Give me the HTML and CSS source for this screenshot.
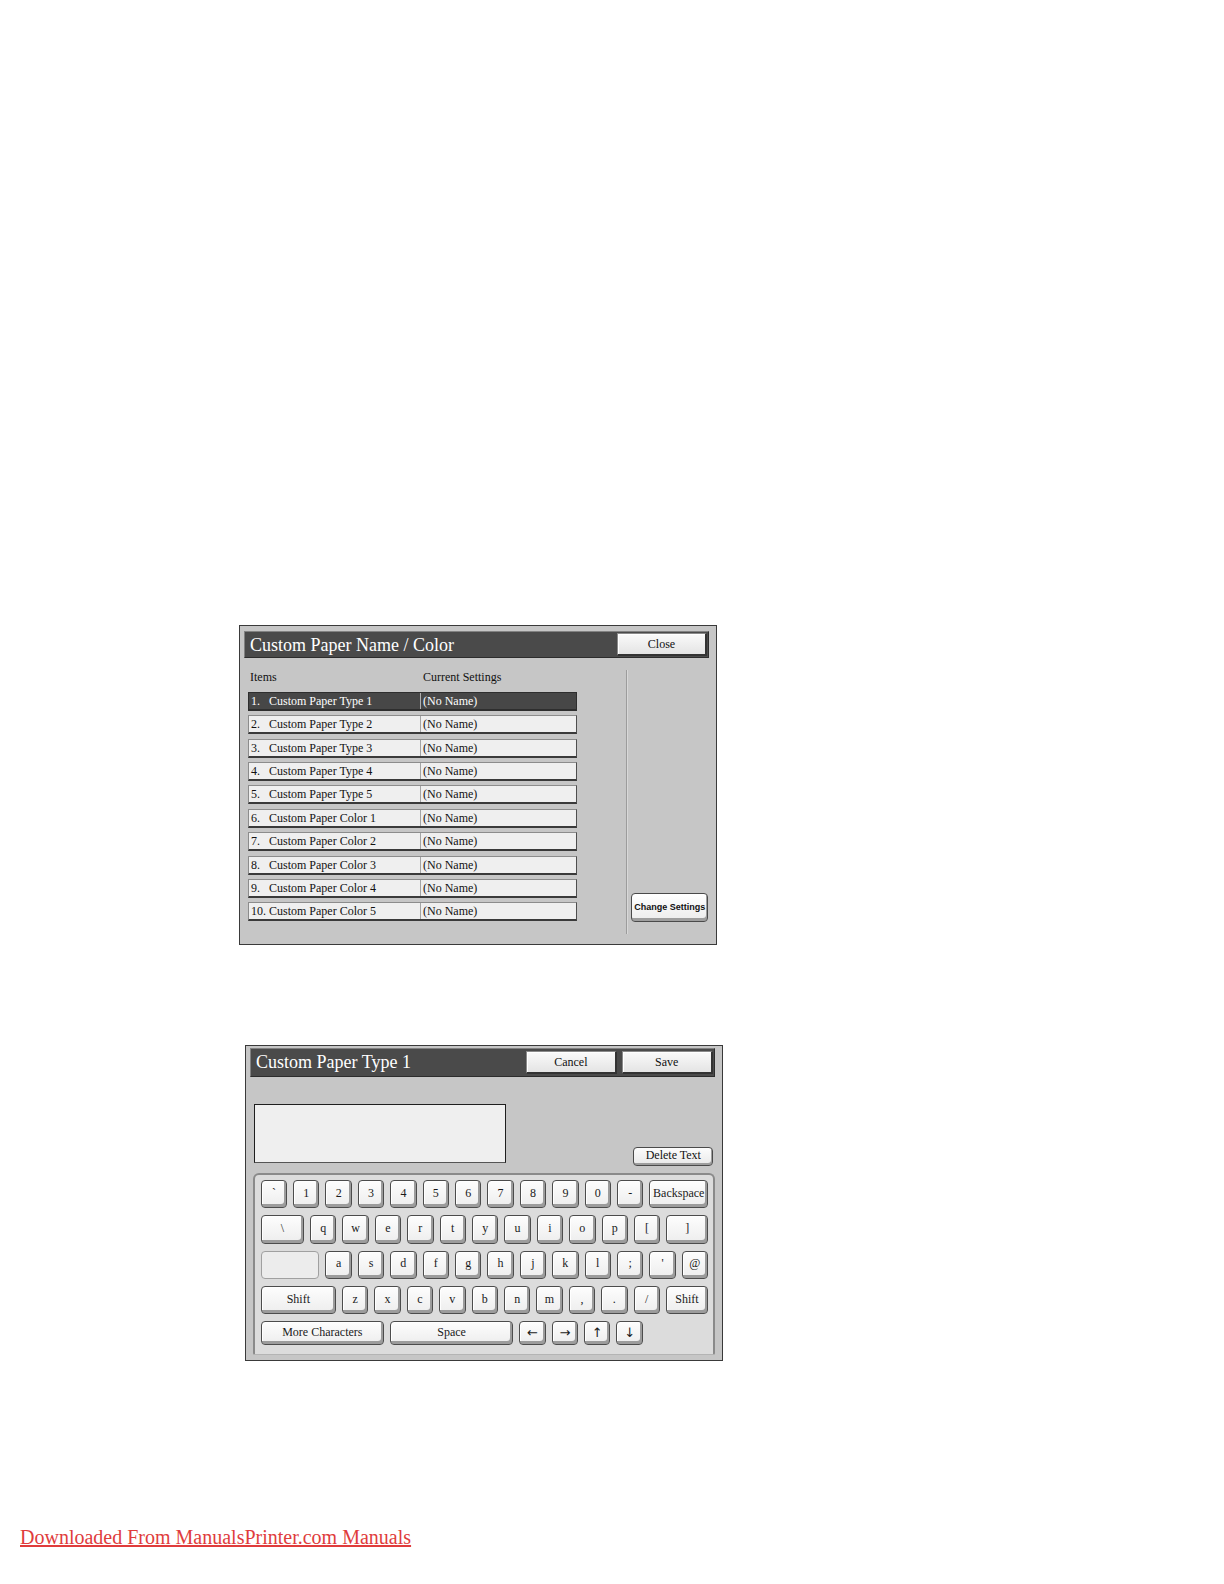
FILE: index.html
```html
<!DOCTYPE html>
<html lang="en">
<head>
<meta charset="utf-8">
<title>Custom Paper Name / Color</title>
<link rel="stylesheet" href="styles.css">
</head>
<body>
<div class="page">
  <section class="dlg dlg-list">
    <header class="titlebar">
      <h1 class="title">Custom Paper Name / Color</h1>
      <button class="tbtn btn-close">Close</button>
    </header>
    <div class="list-body">
      <div class="list">
        <div class="list-head"><span class="col-item">Items</span><span class="col-set">Current Settings</span></div>
        <div class="rows">
          <div class="row sel"><span class="cell-item"><span class="num">1.</span>Custom Paper Type 1</span><span class="cell-set">(No Name)</span></div>
          <div class="row"><span class="cell-item"><span class="num">2.</span>Custom Paper Type 2</span><span class="cell-set">(No Name)</span></div>
          <div class="row"><span class="cell-item"><span class="num">3.</span>Custom Paper Type 3</span><span class="cell-set">(No Name)</span></div>
          <div class="row"><span class="cell-item"><span class="num">4.</span>Custom Paper Type 4</span><span class="cell-set">(No Name)</span></div>
          <div class="row"><span class="cell-item"><span class="num">5.</span>Custom Paper Type 5</span><span class="cell-set">(No Name)</span></div>
          <div class="row"><span class="cell-item"><span class="num">6.</span>Custom Paper Color 1</span><span class="cell-set">(No Name)</span></div>
          <div class="row"><span class="cell-item"><span class="num">7.</span>Custom Paper Color 2</span><span class="cell-set">(No Name)</span></div>
          <div class="row"><span class="cell-item"><span class="num">8.</span>Custom Paper Color 3</span><span class="cell-set">(No Name)</span></div>
          <div class="row"><span class="cell-item"><span class="num">9.</span>Custom Paper Color 4</span><span class="cell-set">(No Name)</span></div>
          <div class="row"><span class="cell-item"><span class="num">10.</span>Custom Paper Color 5</span><span class="cell-set">(No Name)</span></div>
        </div>
      </div>
      <div class="vsep"></div>
      <div class="side"><button class="btn-change">Change Settings</button></div>
    </div>
  </section>

  <section class="dlg dlg-kbd">
    <header class="titlebar titlebar-kbd">
      <h1 class="title">Custom Paper Type 1</h1>
      <button class="tbtn btn-cancel">Cancel</button>
      <button class="tbtn btn-save">Save</button>
    </header>
    <div class="entry-area">
      <div class="textbox"></div>
      <button class="btn-delete">Delete Text</button>
    </div>
    <div class="keyboard">
      <div class="krow">
        <span class="key">`</span><span class="key">1</span><span class="key">2</span><span class="key">3</span><span class="key">4</span><span class="key">5</span><span class="key">6</span><span class="key">7</span><span class="key">8</span><span class="key">9</span><span class="key">0</span><span class="key">-</span><span class="key k-back">Backspace</span>
      </div>
      <div class="krow">
        <span class="key k-bslash">\</span><span class="key">q</span><span class="key">w</span><span class="key">e</span><span class="key">r</span><span class="key">t</span><span class="key">y</span><span class="key">u</span><span class="key">i</span><span class="key">o</span><span class="key">p</span><span class="key">[</span><span class="key k-rbr">]</span>
      </div>
      <div class="krow">
        <span class="key k-blank"></span><span class="key">a</span><span class="key">s</span><span class="key">d</span><span class="key">f</span><span class="key">g</span><span class="key">h</span><span class="key">j</span><span class="key">k</span><span class="key">l</span><span class="key">;</span><span class="key">'</span><span class="key">@</span>
      </div>
      <div class="krow">
        <span class="key k-shift">Shift</span><span class="key">z</span><span class="key">x</span><span class="key">c</span><span class="key">v</span><span class="key">b</span><span class="key">n</span><span class="key">m</span><span class="key">,</span><span class="key">.</span><span class="key">/</span><span class="key k-shift-r">Shift</span>
      </div>
      <div class="krow krow-last">
        <span class="key k-more">More Characters</span><span class="key k-space">Space</span><span class="key k-arrow">&#8592;</span><span class="key k-arrow">&#8594;</span><span class="key k-arrow">&#8593;</span><span class="key k-arrow">&#8595;</span>
      </div>
    </div>
  </section>

  <a class="footer-link" href="#">Downloaded From ManualsPrinter.com Manuals</a>
</div>
</body>
</html>
```

FILE: styles.css
```css
html, body {
  margin: 0;
  padding: 0;
  background: #ffffff;
}

body {
  font-family: "Liberation Serif", "Times New Roman", serif;
  color: #111;
}

.page {
  padding-top: 625px;
  width: 1224px;
}

/* ---------- dialogs ---------- */
.dlg {
  box-sizing: border-box;
  width: 478px;
  border: 1px solid #3a3a3a;
  background: #c6c6c6;
}

.dlg-list {
  margin-left: 239px;
  height: 320px;
  padding: 5px 7px 0 4px;
}

.dlg-kbd {
  margin-left: 245px;
  margin-top: 100px;
  height: 316px;
  padding: 2.3px 7px 0 4px;
}

.titlebar {
  box-sizing: border-box;
  display: flex;
  align-items: center;
  height: 27px;
  background: #4a4a4a;
  border: 1px solid;
  border-color: #828282 #2c2c2c #2c2c2c #828282;
  padding: 0 1px 0 5px;
}

.titlebar-kbd {
  height: 28.4px;
  padding-right: 1.3px;
}

.title {
  margin: 0;
  font-size: 18px;
  font-weight: normal;
  line-height: 1;
  color: #ffffff;
  flex: 1;
  white-space: nowrap;
}

.tbtn {
  box-sizing: border-box;
  margin: 0;
  padding: 0;
  font-family: "Liberation Serif", "Times New Roman", serif;
  font-size: 12px;
  color: #111;
  background: linear-gradient(#fafafa, #e4e4e4);
  border: 1px solid #8a8a8a;
  border-right: 2px solid #333;
  border-bottom: 2px solid #333;
  box-shadow: inset 1px 1px 0 #ffffff;
  line-height: 18px;
  text-align: center;
}

.btn-close {
  width: 90px;
  height: 23px;
}

.btn-cancel {
  width: 90.7px;
  height: 22.6px;
}

.btn-save {
  width: 91px;
  height: 22.6px;
  margin-left: 5px;
}

/* ---------- list dialog ---------- */
.list-body {
  box-sizing: border-box;
  display: flex;
  height: 286px;
  padding: 12px 0 10px 0;
}

.list {
  box-sizing: border-box;
  width: 382px;
  padding-left: 4px;
}

.list-head {
  display: flex;
  height: 15px;
  line-height: 15px;
  font-size: 12px;
  margin-bottom: 6.7px;
}

.col-item {
  box-sizing: border-box;
  width: 173px;
  padding-left: 2px;
}

.col-set {
  padding-left: 2px;
}

.rows {
  display: grid;
  row-gap: 4.43px;
  width: 329px;
}

.row {
  box-sizing: border-box;
  display: flex;
  height: 19px;
  background: #efefef;
  border: 1px solid #8c8c8c;
  border-right-color: #4e4e4e;
  border-bottom: 2px solid #3a3a3a;
  font-size: 12px;
  line-height: 16px;
  white-space: nowrap;
}

.row.sel {
  background: #474747;
  color: #ffffff;
  border-color: #2e2e2e;
}

.cell-item {
  box-sizing: border-box;
  width: 172px;
  padding-left: 2px;
  border-right: 1px solid #a4a4a4;
}

.row.sel .cell-item {
  border-right-color: #b0b0b0;
}

.num {
  display: inline-block;
  width: 18px;
}

.cell-set {
  padding-left: 2px;
}

.vsep {
  width: 1px;
  background: #9c9c9c;
  box-shadow: 1px 0 0 #d8d8d8;
}

.side {
  flex: 1;
  display: flex;
  flex-direction: column;
  justify-content: flex-end;
  padding: 0 0 11.7px 4.3px;
}

.btn-change {
  box-sizing: border-box;
  width: 77px;
  height: 29px;
  margin: 0;
  padding: 0 0 2px 0;
  font-family: "Liberation Sans", Arial, sans-serif;
  font-weight: bold;
  font-size: 9px;
  color: #111;
  background: linear-gradient(#ffffff, #ececec);
  border: 1px solid #4a4a4a;
  border-radius: 4px;
  box-shadow: inset -1px -3px 0 #9e9e9e;
  white-space: nowrap;
}

/* ---------- keyboard dialog ---------- */
.entry-area {
  display: flex;
  justify-content: space-between;
  align-items: flex-start;
  height: 96.6px;
}

.textbox {
  box-sizing: border-box;
  margin: 27.3px 0 0 4px;
  width: 251.7px;
  height: 59.3px;
  background: #efefef;
  border: 1px solid #1e1e1e;
  border-bottom-color: #555;
}

.btn-delete {
  box-sizing: border-box;
  margin: 70px 1.7px 0 0;
  padding: 0 0 1px 0;
  width: 80px;
  height: 19px;
  font-family: "Liberation Serif", "Times New Roman", serif;
  font-size: 12px;
  line-height: 15px;
  color: #111;
  background: linear-gradient(#fcfcfc, #e9e9e9);
  border: 1px solid #4a4a4a;
  border-radius: 4px;
  box-shadow: inset -1px -2px 0 #9e9e9e;
}

.keyboard {
  box-sizing: border-box;
  margin-left: 2.7px;
  width: 462.3px;
  height: 181.7px;
  background: #dcdcdc;
  border: 2px solid #8a8a8a;
  border-bottom: 1px solid #b4b4b4;
  border-radius: 6px 6px 2px 2px;
  padding: 4.7px 0 0 6px;
}

.krow {
  display: flex;
  gap: 6px;
  height: 28.3px;
  margin-bottom: 7px;
}

.krow-last {
  height: 24px;
  margin-bottom: 0;
}

.key {
  box-sizing: border-box;
  display: flex;
  align-items: center;
  justify-content: center;
  width: 26.4px;
  height: 100%;
  padding-bottom: 2px;
  font-size: 12px;
  color: #1a1a1a;
  background: linear-gradient(#fdfdfd, #ededed);
  border: 1px solid #4c4c4c;
  border-radius: 4px;
  box-shadow: inset -2px -3px 0 #9c9c9c, inset 1px 1px 0 #ffffff;
  white-space: nowrap;
}

.k-back { width: 58.8px; }
.k-bslash { width: 43.3px; }
.k-rbr { width: 41.9px; }
.k-shift { width: 75.3px; }
.k-shift-r { width: 42.3px; }
.k-more { width: 123.3px; }
.k-space { width: 123.3px; }

.k-blank {
  width: 58.7px;
  background: #ececec;
  border-color: #a0a0a0;
  box-shadow: none;
}

.k-arrow {
  font-family: "DejaVu Sans", "Liberation Serif", sans-serif;
  font-size: 13px;
}

/* ---------- footer ---------- */
.footer-link {
  display: inline-block;
  margin: 165px 0 0 20px;
  font-family: "Liberation Serif", "Times New Roman", serif;
  font-size: 20px;
  color: #e03c3c;
  text-decoration: underline;
}
```
